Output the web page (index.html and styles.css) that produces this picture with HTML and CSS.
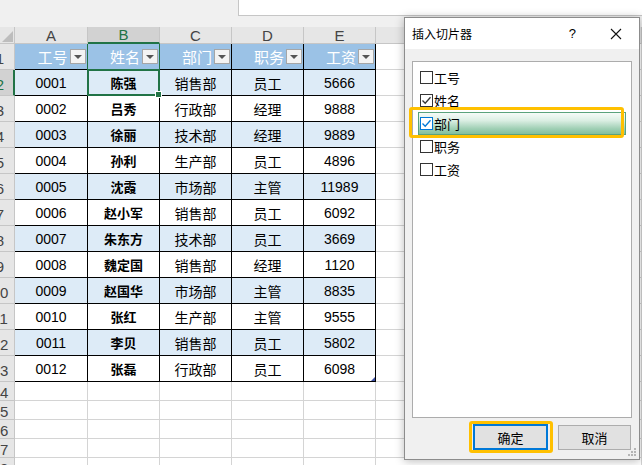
FILE: index.html
```html
<!DOCTYPE html>
<html>
<head>
<meta charset="utf-8">
<link rel="stylesheet" href="styles.css">
</head>
<body>
<div class="topbar"><div class="fbox"></div></div>
<div class="sheet">
  <div class="corner"><svg width="15" height="17" viewBox="0 0 15 17"><polygon points="13,4 13,15 2,15" fill="#bdbdbd"/></svg></div>
  <div class="ch">A</div><div class="ch sel">B</div><div class="ch">C</div><div class="ch">D</div><div class="ch">E</div><div class="ch"></div>

  <div class="rh"><span>1</span></div>
  <div class="c t th gr"><span class="lbl">工号</span><span class="fb"></span></div>
  <div class="c t th gr"><span class="lbl">姓名</span><span class="fb"></span></div>
  <div class="c t th"><span class="lbl">部门</span><span class="fb"></span></div>
  <div class="c t th"><span class="lbl">职务</span><span class="fb"></span></div>
  <div class="c t th"><span class="lbl">工资</span><span class="fb"></span></div>
  <div class="c"></div>

  <div class="rh sel"><span>2</span></div>
  <div class="c t b">0001</div><div class="c t b nm act">陈强</div><div class="c t b cn">销售部</div><div class="c t b cn">员工</div><div class="c t b">5666</div><div class="c"></div>

  <div class="rh"><span>3</span></div>
  <div class="c t">0002</div><div class="c t nm">吕秀</div><div class="c t cn">行政部</div><div class="c t cn">经理</div><div class="c t">9888</div><div class="c"></div>

  <div class="rh"><span>4</span></div>
  <div class="c t b">0003</div><div class="c t b nm">徐丽</div><div class="c t b cn">技术部</div><div class="c t b cn">经理</div><div class="c t b">9889</div><div class="c"></div>

  <div class="rh"><span>5</span></div>
  <div class="c t">0004</div><div class="c t nm">孙利</div><div class="c t cn">生产部</div><div class="c t cn">员工</div><div class="c t">4896</div><div class="c"></div>

  <div class="rh"><span>6</span></div>
  <div class="c t b">0005</div><div class="c t b nm">沈霞</div><div class="c t b cn">市场部</div><div class="c t b cn">主管</div><div class="c t b">11989</div><div class="c"></div>

  <div class="rh"><span>7</span></div>
  <div class="c t">0006</div><div class="c t nm">赵小军</div><div class="c t cn">销售部</div><div class="c t cn">员工</div><div class="c t">6092</div><div class="c"></div>

  <div class="rh"><span>8</span></div>
  <div class="c t b">0007</div><div class="c t b nm">朱东方</div><div class="c t b cn">技术部</div><div class="c t b cn">员工</div><div class="c t b">3669</div><div class="c"></div>

  <div class="rh"><span>9</span></div>
  <div class="c t">0008</div><div class="c t nm">魏定国</div><div class="c t cn">销售部</div><div class="c t cn">经理</div><div class="c t">1120</div><div class="c"></div>

  <div class="rh"><span>10</span></div>
  <div class="c t b">0009</div><div class="c t b nm">赵国华</div><div class="c t b cn">市场部</div><div class="c t b cn">主管</div><div class="c t b">8835</div><div class="c"></div>

  <div class="rh"><span>11</span></div>
  <div class="c t">0010</div><div class="c t nm">张红</div><div class="c t cn">生产部</div><div class="c t cn">主管</div><div class="c t">9555</div><div class="c"></div>

  <div class="rh"><span>12</span></div>
  <div class="c t b">0011</div><div class="c t b nm">李贝</div><div class="c t b cn">销售部</div><div class="c t b cn">员工</div><div class="c t b">5802</div><div class="c"></div>

  <div class="rh"><span>13</span></div>
  <div class="c t">0012</div><div class="c t nm">张磊</div><div class="c t cn">行政部</div><div class="c t cn">员工</div><div class="c t end">6098</div><div class="c"></div>

  <div class="rh"><span>14</span></div><div class="c"></div><div class="c"></div><div class="c"></div><div class="c"></div><div class="c"></div><div class="c"></div>
  <div class="rh"><span>15</span></div><div class="c"></div><div class="c"></div><div class="c"></div><div class="c"></div><div class="c"></div><div class="c"></div>
  <div class="rh"><span>16</span></div><div class="c"></div><div class="c"></div><div class="c"></div><div class="c"></div><div class="c"></div><div class="c"></div>
  <div class="rh"><span>17</span></div><div class="c"></div><div class="c"></div><div class="c"></div><div class="c"></div><div class="c"></div><div class="c"></div>
  <div class="rh"><span>18</span></div><div class="c"></div><div class="c"></div><div class="c"></div><div class="c"></div><div class="c"></div><div class="c"></div>
</div>

<div class="dialog">
  <div class="dtitle">
    <span class="tt">插入切片器</span>
    <span class="q">?</span>
    <svg class="xbtn" width="12" height="12" viewBox="0 0 12 12"><path d="M1 1 L11 11 M11 1 L1 11" stroke="#111" stroke-width="1.1" fill="none"/></svg>
  </div>
  <div class="dbody">
    <div class="list">
      <div class="item"><span class="cb"></span><span>工号</span></div>
      <div class="item"><span class="cb"><svg width="11" height="11" viewBox="0 0 11 11"><path d="M1.5 5.5 L4.2 8.3 L9.5 2.2" stroke="#333" stroke-width="1.3" fill="none"/></svg></span><span>姓名</span></div>
      <div class="item on"><span class="cb blue"><svg width="11" height="11" viewBox="0 0 11 11"><path d="M1.5 5.5 L4.2 8.3 L9.5 2.2" stroke="#0078d7" stroke-width="1.3" fill="none"/></svg></span><span>部门</span></div>
      <div class="item"><span class="cb"></span><span>职务</span></div>
      <div class="item"><span class="cb"></span><span>工资</span></div>
    </div>
    <div class="btns">
      <span class="ring"><span class="btn ok">确定</span></span>
      <span class="btn">取消</span>
    </div>
  </div>
  <div class="mark"></div>
  <svg class="grip" width="9" height="9" viewBox="0 0 9 9"><g fill="#b5b5b5"><rect x="6" y="0" width="2" height="2"/><rect x="3" y="3" width="2" height="2"/><rect x="6" y="3" width="2" height="2"/><rect x="0" y="6" width="2" height="2"/><rect x="3" y="6" width="2" height="2"/><rect x="6" y="6" width="2" height="2"/></g></svg>
</div>
</body>
</html>
```

FILE: styles.css
```css
html, body {
  margin: 0;
  padding: 0;
}
body {
  width: 642px;
  height: 465px;
  overflow: hidden;
  position: relative;
  background: #fff;
  font-family: "Liberation Sans", "Noto Sans CJK SC", sans-serif;
  color: #000;
}
.topbar {
  height: 27px;
  background: #f0f0f0;
  display: flex;
}
.fbox {
  margin-left: 238px;
  flex: 1;
  height: 16px;
  box-sizing: border-box;
  background: #fff;
  border-left: 1px solid #c6c6c6;
  border-bottom: 1px solid #c6c6c6;
}
.sheet {
  display: grid;
  grid-template-columns: 15px 73px 72px 72px 72px 72px 1fr;
  grid-template-rows: 17px repeat(13, 26px) repeat(5, 19px);
}
.sheet > div {
  box-sizing: border-box;
  border-right: 1px solid #d4d4d4;
  border-bottom: 1px solid #d4d4d4;
  display: flex;
  align-items: center;
  justify-content: center;
  position: relative;
}
.sheet > .corner {
  background: #e6e6e6;
  border-color: #c6c6c6;
  display: block;
}
.corner svg { display: block; }
.sheet > .ch {
  background: #e6e6e6;
  border-color: #c6c6c6;
  color: #444;
  font-size: 15px;
}
.sheet > .ch.sel {
  background: #d2d2d2;
  color: #217346;
  border-bottom: 2px solid #217346;
}
.sheet > .rh {
  background: #e6e6e6;
  border-color: #c6c6c6;
  color: #444;
  font-size: 15px;
  justify-content: flex-start;
  overflow: hidden;
  padding-top: 3px;
}
.rh span {
  flex: none;
  width: 30px;
  margin-left: -15px;
  text-align: center;
}
.sheet > .rh.sel {
  background: #d2d2d2;
  color: #217346;
  border-right: 2px solid #217346;
}
.sheet > .t {
  border-color: #000;
  font-size: 14px;
}
.sheet > .b {
  background: #ddebf7;
}
.sheet > .th {
  background: #9bc2e6;
  color: #fff;
  font-size: 15px;
  justify-content: flex-start;
}
.sheet > .gr {
  border-right-color: #217346;
}
.lbl {
  flex: 1;
  text-align: center;
  padding-left: 20px;
}
.fb {
  flex: none;
  width: 16px;
  height: 15px;
  box-sizing: border-box;
  border: 1px solid #a6a6a6;
  background: #f3f3f3;
  margin-right: 1px;
  display: flex;
  align-items: center;
  justify-content: center;
}
.fb::before {
  content: "";
  border-left: 4px solid transparent;
  border-right: 4px solid transparent;
  border-top: 4px solid #555;
}
.cn {
  font-size: 15px;
}
.sheet > .nm {
  font-size: 13px;
  font-weight: 700;
}
.act::after {
  content: "";
  position: absolute;
  left: -1px;
  top: -1px;
  right: -1px;
  bottom: -1px;
  border: 2px solid #217346;
}
.act::before {
  content: "";
  position: absolute;
  right: -3px;
  bottom: -3px;
  width: 5px;
  height: 5px;
  background: #217346;
  border: 1px solid #fff;
  z-index: 2;
}
.end::after {
  content: "";
  position: absolute;
  right: 0;
  bottom: 0;
  border-left: 4px solid transparent;
  border-bottom: 4px solid #3e4fa3;
}

/* dialog */
.dialog {
  position: absolute;
  left: 404px;
  top: 17px;
  width: 236px;
  height: 443px;
  box-sizing: border-box;
  border: 1px solid #8c8c8c;
  background: #f0f0f0;
  box-shadow: 0 1px 9px rgba(0, 0, 0, 0.28);
  display: flex;
  flex-direction: column;
  font-family: "Noto Sans CJK SC", sans-serif;
}
.dtitle {
  height: 31px;
  flex: none;
  background: #fff;
  display: flex;
  align-items: center;
  padding-left: 7px;
  font-size: 12px;
}
.tt { flex: 1; }
.q {
  font-family: "Liberation Sans", sans-serif;
  font-size: 13px;
  margin-right: 34px;
}
.xbtn {
  margin-right: 17px;
}
.dbody {
  flex: 1;
  padding: 12px 7px 0 7px;
  display: flex;
  flex-direction: column;
}
.list {
  height: 357px;
  box-sizing: border-box;
  border: 1px solid #acacac;
  background: #fff;
  padding: 4px 5px 0 5px;
}
.item {
  height: 23px;
  box-sizing: border-box;
  display: flex;
  align-items: center;
  padding-left: 1px;
  border: 1px solid transparent;
  font-size: 13px;
}
.item.on {
  border-color: #5aa27c;
  background: linear-gradient(to bottom, #f6fbf8 0%, #dcefe4 35%, #9fcfb4 75%, #82bf9d 100%);
}
.cb {
  width: 13px;
  height: 13px;
  box-sizing: border-box;
  border: 1px solid #333;
  background: #fff;
  margin-right: 1px;
  display: flex;
  align-items: center;
  justify-content: center;
}
.cb svg { display: block; }
.cb.blue { border-color: #0078d7; }
.btns {
  display: flex;
  align-items: center;
  margin-top: 3px;
  padding-left: 57px;
}
.ring {
  display: flex;
  border: 3px solid #ffc000;
  border-radius: 3px;
  padding: 0 2px 0 1px;
}
.btn {
  width: 73px;
  height: 25px;
  box-sizing: border-box;
  border: 1px solid #adadad;
  background: #e1e1e1;
  display: flex;
  align-items: center;
  justify-content: center;
  font-size: 13px;
  margin-left: 5px;
}
.btn.ok {
  width: 75px;
  height: 26px;
  border: 2px solid #0078d7;
  margin-left: 0;
}
.mark {
  position: absolute;
  left: 4px;
  top: 89px;
  width: 215px;
  height: 31px;
  box-sizing: border-box;
  border: 3px solid #ffc000;
  border-radius: 3px;
}
.grip {
  position: absolute;
  right: 2px;
  bottom: 2px;
}
```
